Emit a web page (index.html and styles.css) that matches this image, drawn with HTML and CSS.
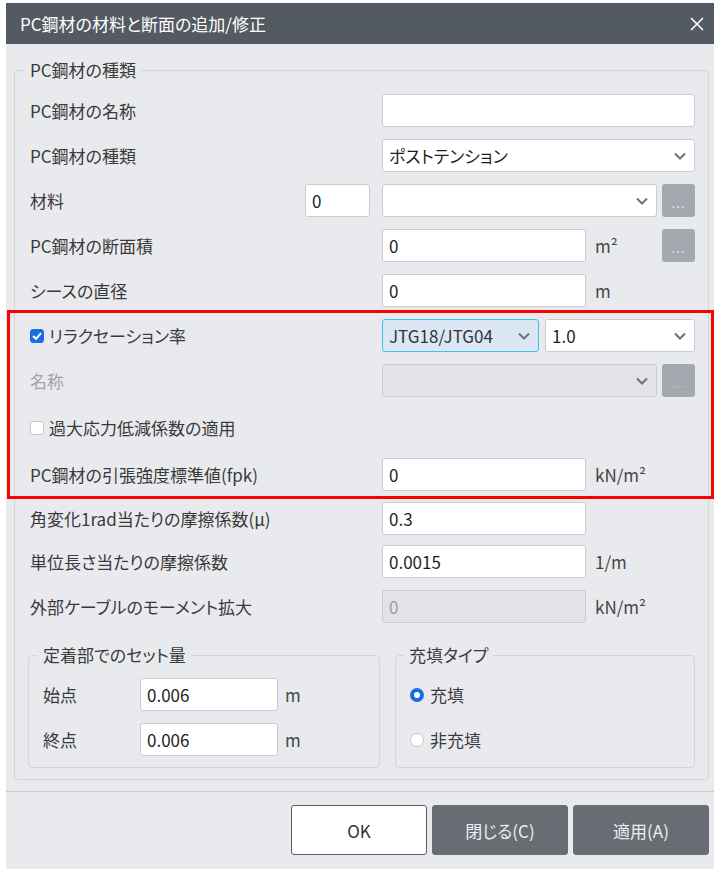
FILE: index.html
```html
<!DOCTYPE html>
<html lang="ja">
<head>
    <meta charset="UTF-8">
    <title>PC鋼材の材料と断面の追加/修正</title>
    <link rel="stylesheet" href="styles.css">
</head>
<body>
    <div class="dialog">
        <div class="titlebar">
            <span>PC鋼材の材料と断面の追加/修正</span>
            <svg class="close" width="14" height="14" viewBox="0 0 14 14">
                <path d="M1 1 L13 13 M13 1 L1 13" stroke="#fff" stroke-width="1.6" fill="none"/>
            </svg>
        </div>

        <div class="content">
            <fieldset class="group">
                <legend>PC鋼材の種類</legend>

                <div class="row">
                    <span class="label">PC鋼材の名称</span>
                    <div class="ctl"><input class="field full" type="text" value=""></div>
                </div>
                <div class="row">
                    <span class="label">PC鋼材の種類</span>
                    <div class="ctl">
                        <div class="select full"><span>ポストテンション</span><svg class="chev" width="12" height="8" viewBox="0 0 12 8"><path d="M1 1.5 L6 6.5 L11 1.5"/></svg></div>
                    </div>
                </div>
                <div class="row">
                    <span class="label">材料</span>
                    <input class="field small" type="text" value="0">
                    <div class="ctl">
                        <div class="select with-btn"><span></span><svg class="chev" width="12" height="8" viewBox="0 0 12 8"><path d="M1 1.5 L6 6.5 L11 1.5"/></svg></div>
                        <div class="dots">...</div>
                    </div>
                </div>
                <div class="row">
                    <span class="label">PC鋼材の断面積</span>
                    <div class="ctl">
                        <input class="field unit-field" type="text" value="0">
                        <span class="unit">m²</span>
                        <div class="dots">...</div>
                    </div>
                </div>
                <div class="row">
                    <span class="label">シースの直径</span>
                    <div class="ctl">
                        <input class="field unit-field" type="text" value="0">
                        <span class="unit">m</span>
                    </div>
                </div>

                <!-- highlighted block -->
                <div class="highlight">
                    <div class="row">
                        <span class="label"><span class="check on"><svg width="10" height="8" viewBox="0 0 10 8"><path d="M1 4 L4 6.8 L9 1.2"/></svg></span>リラクセーション率</span>
                        <div class="ctl">
                            <div class="select jtg"><span>JTG18/JTG04</span><svg class="chev" width="12" height="8" viewBox="0 0 12 8"><path d="M1 1.5 L6 6.5 L11 1.5"/></svg></div>
                            <div class="select ratio"><span>1.0</span><svg class="chev" width="12" height="8" viewBox="0 0 12 8"><path d="M1 1.5 L6 6.5 L11 1.5"/></svg></div>
                        </div>
                    </div>
                    <div class="row">
                        <span class="label disabled">名称</span>
                        <div class="ctl">
                            <div class="select with-btn off"><span></span><svg class="chev" width="12" height="8" viewBox="0 0 12 8"><path d="M1 1.5 L6 6.5 L11 1.5"/></svg></div>
                            <div class="dots off">...</div>
                        </div>
                    </div>
                    <div class="row tall">
                        <span class="label"><span class="check"></span>過大応力低減係数の適用</span>
                    </div>
                    <div class="row">
                        <span class="label">PC鋼材の引張強度標準値(fpk)</span>
                        <div class="ctl">
                            <input class="field unit-field" type="text" value="0">
                            <span class="unit">kN/m²</span>
                        </div>
                    </div>
                </div>

                <div class="row short">
                    <span class="label">角変化1rad当たりの摩擦係数(μ)</span>
                    <div class="ctl"><input class="field unit-field" type="text" value="0.3"></div>
                </div>
                <div class="row">
                    <span class="label">単位長さ当たりの摩擦係数</span>
                    <div class="ctl">
                        <input class="field unit-field" type="text" value="0.0015">
                        <span class="unit">1/m</span>
                    </div>
                </div>
                <div class="row">
                    <span class="label">外部ケーブルのモーメント拡大</span>
                    <div class="ctl">
                        <input class="field unit-field off" type="text" value="0" disabled>
                        <span class="unit">kN/m²</span>
                    </div>
                </div>

                <div class="subgroups">
                    <fieldset class="group sub anchor">
                        <legend>定着部でのセット量</legend>
                        <div class="row">
                            <span class="sublabel">始点</span>
                            <input class="field anchor-field" type="text" value="0.006">
                            <span class="unit small-gap">m</span>
                        </div>
                        <div class="row">
                            <span class="sublabel">終点</span>
                            <input class="field anchor-field" type="text" value="0.006">
                            <span class="unit small-gap">m</span>
                        </div>
                    </fieldset>
                    <fieldset class="group sub fill">
                        <legend>充填タイプ</legend>
                        <div class="row">
                            <span class="radio on"></span><span class="radio-label">充填</span>
                        </div>
                        <div class="row">
                            <span class="radio"></span><span class="radio-label">非充填</span>
                        </div>
                    </fieldset>
                </div>
            </fieldset>
        </div>

        <div class="footer">
            <button class="btn ok">OK</button>
            <button class="btn dark">閉じる(C)</button>
            <button class="btn dark">適用(A)</button>
        </div>
    </div>
</body>
</html>
```

FILE: styles.css
```css
body {
    margin: 0;
    background-color: #ffffff;
    font-family: "Noto Sans CJK JP", "Noto Sans", sans-serif;
    font-size: 17px;
    font-feature-settings: "palt";
    color: #3a3a3a;
}

.dialog {
    margin: 3px 0 0 6px;
    width: 708px;
    min-height: 866px;
    background-color: #e9eaee;
    display: flex;
    flex-direction: column;
}

.titlebar {
    height: 41px;
    background-color: #545a62;
    color: #ffffff;
    display: flex;
    align-items: center;
    justify-content: space-between;
    padding: 0 10px 0 14px;
}

.content {
    padding: 14px 5px 0 8px;
}

.group {
    margin: 0;
    border: 1px solid #d3d5d9;
    border-radius: 4px;
    padding: 6px 13px 11px 15px;
}

.group legend {
    padding: 0 5px;
    margin-left: -5px;
    line-height: 24px;
}

.row {
    height: 45px;
    display: flex;
    align-items: center;
}

.row.tall {
    height: 49px;
}

.row.short {
    height: 42px;
}

.label {
    flex: 1;
    display: flex;
    align-items: center;
    white-space: nowrap;
}

.label.disabled {
    color: #a2a4a8;
}

.ctl {
    width: 313px;
    display: flex;
    align-items: center;
}

.field {
    box-sizing: border-box;
    height: 33px;
    border: 1px solid #c9ccd1;
    border-radius: 3px;
    background-color: #ffffff;
    font: inherit;
    color: #1e1e1e;
    padding: 0 6px;
    outline: none;
}

.field.full {
    width: 313px;
}

.field.small {
    width: 65px;
    margin-right: 12px;
}

.field.unit-field {
    width: 204px;
}

.field.off {
    background-color: #e1e3e7;
    color: #9a9ca0;
}

.select {
    box-sizing: border-box;
    height: 33px;
    border: 1px solid #c9ccd1;
    border-radius: 3px;
    background-color: #ffffff;
    color: #1e1e1e;
    display: flex;
    align-items: center;
    justify-content: space-between;
    padding: 0 8px 0 6px;
}

.select.full {
    width: 313px;
}

.select.with-btn {
    width: 275px;
}

.select.jtg {
    width: 158px;
    background-color: #dce7f5;
    border-color: #3fc0ef;
    color: #333;
}

.select.ratio {
    width: 151px;
    margin-left: 6px;
}

.select.off {
    background-color: #e1e3e7;
}

.chev path {
    fill: none;
    stroke: #6e7277;
    stroke-width: 2;
}

.dots {
    width: 33px;
    height: 33px;
    margin-left: auto;
    border-radius: 3px;
    background-color: #a4a9b0;
    color: #eef0f3;
    font-size: 13px;
    line-height: 38px;
    text-align: center;
    letter-spacing: 1px;
}

.dots.off {
    color: #c3c6cb;
}

.unit {
    margin-left: 9px;
    color: #454545;
}

.unit.small-gap {
    margin-left: 7px;
}

.highlight {
    position: relative;
}

.highlight::after {
    content: "";
    position: absolute;
    top: -3px;
    bottom: -2px;
    left: -23px;
    right: -19px;
    border: 3px solid #ff0000;
    pointer-events: none;
}

.check {
    box-sizing: border-box;
    width: 14px;
    height: 14px;
    margin-right: 5px;
    border: 1px solid #c6c9ce;
    border-radius: 3px;
    background-color: #ffffff;
    display: inline-flex;
    align-items: center;
    justify-content: center;
}

.check.on {
    background-color: #1a6fe0;
    border-color: #1a6fe0;
}

.check path {
    fill: none;
    stroke: #ffffff;
    stroke-width: 2;
}

.subgroups {
    display: flex;
    gap: 15px;
    margin: 14px 0 0 -2px;
}

.group.sub {
    padding: 5px 13px 5px 14px;
}

.group.sub.anchor {
    width: 352px;
    box-sizing: border-box;
}

.group.sub.fill {
    width: 300px;
    box-sizing: border-box;
    padding-left: 13px;
}

.sublabel {
    width: 97px;
}

.field.anchor-field {
    width: 138px;
}

.radio {
    box-sizing: border-box;
    width: 14px;
    height: 14px;
    margin-left: 1px;
    margin-right: 6px;
    border: 1px solid #c6c9ce;
    border-radius: 50%;
    background-color: #ffffff;
}

.radio.on {
    border: 4px solid #1a6fe0;
}

.footer {
    margin-top: 11px;
    border-top: 1px solid #c9ccd1;
    padding: 13px 5px 0 0;
    display: flex;
    justify-content: flex-end;
    gap: 5px;
}

.btn {
    width: 136px;
    height: 50px;
    border-radius: 3px;
    font: inherit;
    cursor: pointer;
}

.btn.ok {
    background-color: #ffffff;
    border: 1px solid #5a5e64;
    color: #333333;
}

.btn.dark {
    background-color: #686d74;
    border: 1px solid #686d74;
    color: #eceef0;
}
```
